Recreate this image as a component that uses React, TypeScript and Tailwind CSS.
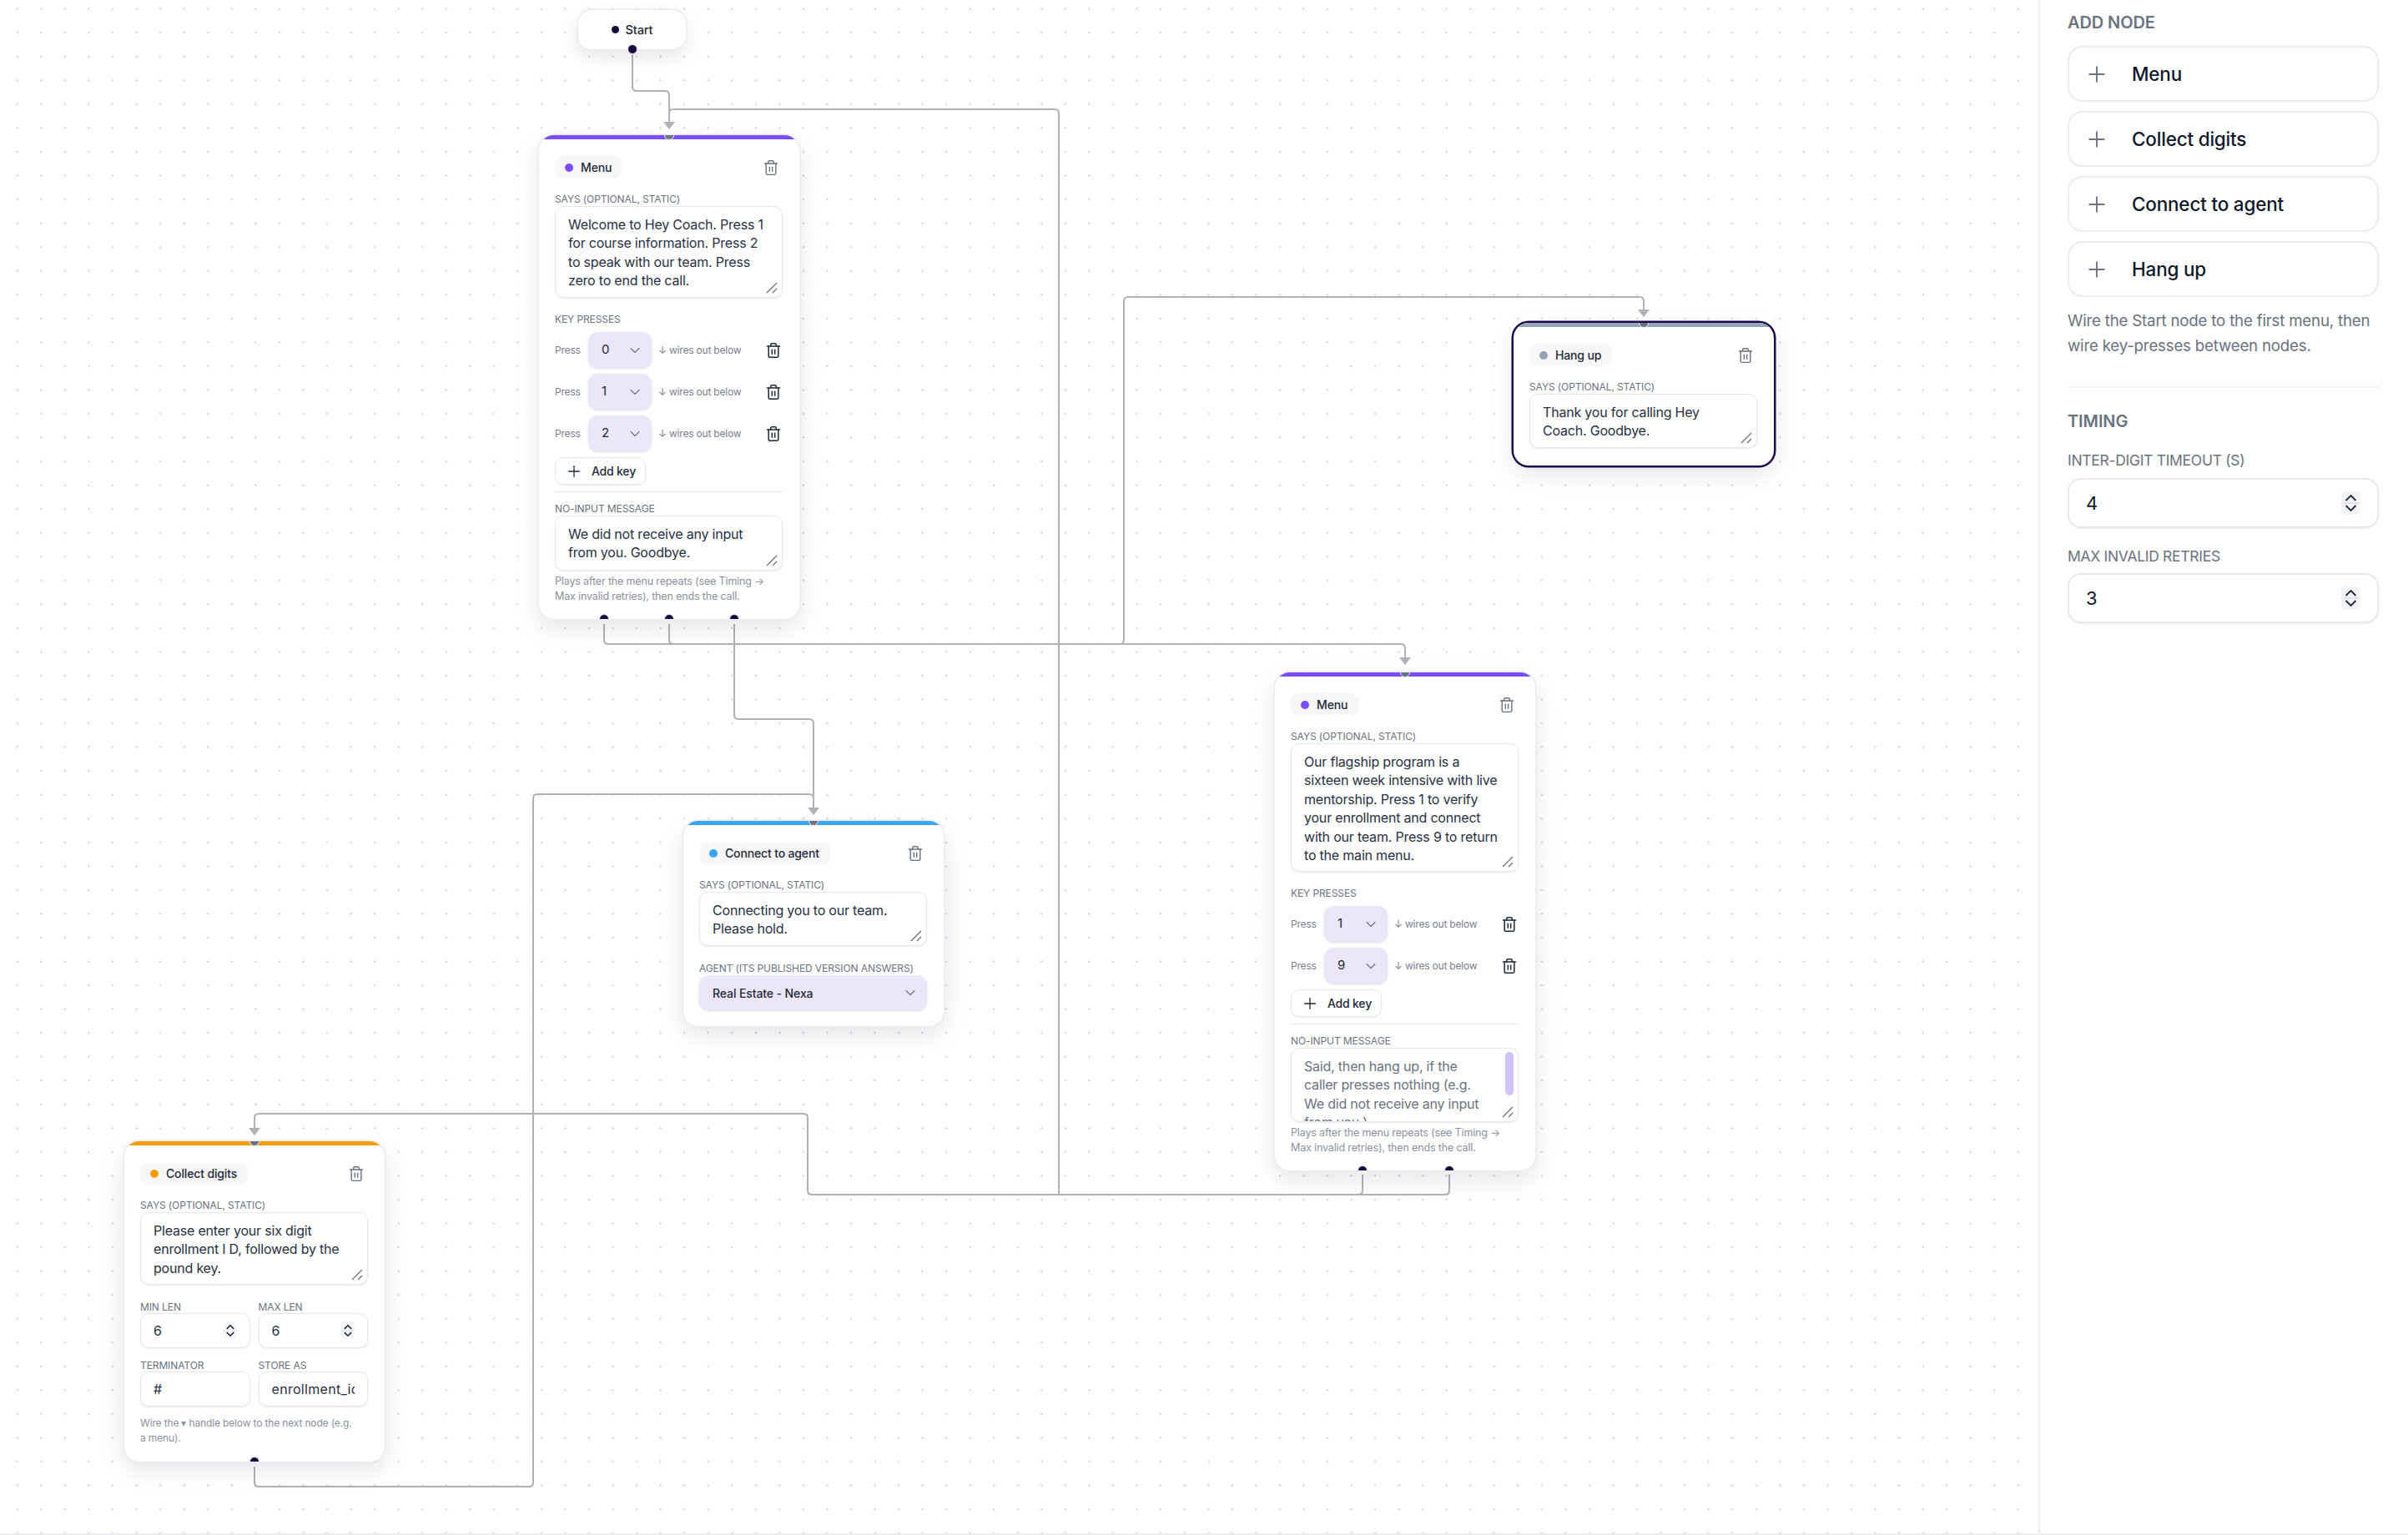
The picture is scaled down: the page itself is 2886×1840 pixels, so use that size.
import type { ReactNode } from "react";
import { ChevronDown, Plus, Trash2 } from "lucide-react";

const EDGE_PATHS = [
  "M758 65 V104 Q758 109 763 109 H797 Q802 109 802 114 V150",
  "M1737 1408 V1427 Q1737 1432 1732 1432 H973 Q968 1432 968 1427 V1340 Q968 1335 963 1335 H310 Q305 1335 305 1340 V1356",
  "M1633 1408 V1427 Q1633 1432 1628 1432",
  "M1269 1432 V136 Q1269 131 1264 131 H807 Q802 131 802 136",
  "M724 748 V767 Q724 772 729 772 H1679 Q1684 772 1684 777 V792",
  "M802 748 V767 Q802 772 807 772",
  "M1342 772 Q1347 772 1347 767 V361 Q1347 356 1352 356 H1965 Q1970 356 1970 361 V375",
  "M880 748 V857 Q880 862 885 862 H970 Q975 862 975 867 V972",
  "M305 1758 V1777 Q305 1782 310 1782 H634 Q639 1782 639 1777 V957 Q639 952 644 952 H970 Q975 952 975 957",
];

const ARROWS = [
  "795,146 809,146 802,155",
  "298,1352 312,1352 305,1361",
  "1677,788 1691,788 1684,797",
  "1963,371 1977,371 1970,380",
  "968,968 982,968 975,977",
];

function Edges() {
  return (
    <svg className="absolute left-0 top-0" width="2443" height="1838" fill="none">
      {EDGE_PATHS.map((d) => (
        <path key={d} d={d} stroke="#b1b1b7" strokeWidth="2" />
      ))}
      {ARROWS.map((p) => (
        <polygon key={p} points={p} fill="#b1b1b7" />
      ))}
    </svg>
  );
}

function Label({ children, className = "" }: { children: ReactNode; className?: string }) {
  return <div className={`h-[15px] text-[12px] leading-[17px] uppercase text-[#6b7280] tracking-[-0.1px] whitespace-nowrap ${className}`}>{children}</div>;
}

function Grip() {
  return (
    <svg className="absolute right-[6px] bottom-[5px]" width="14" height="14" fill="none" stroke="#6b6b70" strokeWidth="1.2">
      <path d="M1 13 L13 1 M8 13 L13 8" />
    </svg>
  );
}

function TextBox({ value, placeholder, height, scrollbar }: { value?: string; placeholder?: string; height: string; scrollbar?: boolean }) {
  return (
    <div className={`relative mt-[2px] ${height}`}>
      <textarea
        readOnly
        defaultValue={value}
        placeholder={placeholder}
        className={`block w-full h-full resize-none overflow-hidden rounded-[10px] border border-[#e6e6ec] bg-white pl-[15px] ${
          scrollbar ? "pr-[30px]" : "pr-[15px]"
        } pt-[10px] pb-[8px] text-[16px] leading-[22.4px] tracking-[-0.2px] text-[#273043] placeholder:text-[#6b7280] shadow-[0_1px_2px_rgba(30,30,60,0.08)] outline-none`}
      />
      {scrollbar && <div className="absolute right-[6px] top-[5px] w-[10px] h-[52px] rounded-[5px] bg-[#d0c3f7]" />}
      <Grip />
    </div>
  );
}

function Handle({ side, x, color }: { side: "top" | "bottom"; x: string; color: string }) {
  return (
    <div className={`absolute ${x} ${side === "top" ? "top-[-6px]" : "bottom-[-6px]"} w-[12px] h-[12px] -ml-[6px] rounded-full border border-[#ece9f8] ${color}`} />
  );
}

function Card({
  pos,
  bar,
  dot,
  title,
  selected,
  handles,
  children,
}: {
  pos: string;
  bar: string;
  dot: string;
  title: string;
  selected?: boolean;
  handles: ReactNode;
  children: ReactNode;
}) {
  return (
    <div
      className={`absolute ${pos} w-[312px] rounded-[18px] overflow-hidden bg-white pl-[19px] pr-[20px] pt-[25px] ${
        selected
          ? "shadow-[0_0_0_2.5px_#1e0b4b,0_10px_28px_rgba(30,30,60,0.12)]"
          : "shadow-[0_0_0_1.5px_#ebebf2,0_10px_28px_rgba(30,30,60,0.12)]"
      }`}
    >
      <div className={`absolute left-0 right-0 top-0 h-[5px] ${bar}`} />
      {handles}
      <div className="flex items-center justify-between h-[27px]">
        <div className="flex items-center h-[27px] rounded-[9px] bg-[#f7f7f9] pl-[12px] pr-[13px] gap-[9px]">
          <span className={`w-[10px] h-[10px] rounded-full ${dot}`} />
          <span className="text-[14px] font-medium tracking-[-0.15px] text-[#1f2937]">{title}</span>
        </div>
        <Trash2 size={20} strokeWidth={1.7} className="text-[#6b7280] mr-[4px]" />
      </div>
      {children}
    </div>
  );
}

function KeyRow({ digit }: { digit: string }) {
  return (
    <div className="flex items-center h-[43px] mb-[7px]">
      <span className="w-[40px] text-[12px] text-[#7b8090] tracking-[-0.2px]">Press</span>
      <div className="flex items-center justify-between w-[76px] h-[43px] rounded-[12px] bg-[#ebe7f9] shadow-[0_1px_3px_rgba(30,30,60,0.15)] pl-[16px] pr-[10px]">
        <span className="text-[15px] text-[#1f2937]">{digit}</span>
        <ChevronDown size={20} strokeWidth={1.3} className="text-[#6b7280]" />
      </div>
      <span className="ml-[8px] w-[130px] text-[12px] text-[#7b8090] tracking-[-0.2px] whitespace-nowrap">↓ wires out below</span>
      <Trash2 size={20} strokeWidth={1.8} className="text-[#1f2937] -ml-[2px]" />
    </div>
  );
}

function AddKey() {
  return (
    <div className="flex items-center w-[109px] h-[33px] rounded-[10px] border border-[#e6e6ec] shadow-[0_1px_2px_rgba(30,30,60,0.08)] pl-[11px] gap-[10px]">
      <Plus size={22} strokeWidth={1.4} className="text-[#1f2937]" />
      <span className="text-[14px] font-medium tracking-[-0.2px] text-[#1f2937]">Add key</span>
    </div>
  );
}

function Hint() {
  return (
    <div className="mt-[4px] pb-[18px] text-[12.5px] leading-[18px] text-[#8b90a0] tracking-[-0.15px] whitespace-nowrap">
      Plays after the menu repeats (see Timing →
      <br />
      Max invalid retries), then ends the call.
    </div>
  );
}

function Spinner({ big }: { big?: boolean }) {
  return (
    <svg
      viewBox="0 0 23 28"
      width={big ? 23 : 16}
      height={big ? 28 : 20}
      fill="none"
      className="shrink-0 rounded-[5px] bg-[#f3f4f6]"
    >
      <path d="M0 14 H23" stroke="#e2e2e6" strokeWidth="1.5" />
      <path d="M5.5 11 L11.5 5 L17.5 11 M5.5 17 L11.5 23 L17.5 17" stroke="#1f2937" strokeWidth={big ? 1.8 : 2.2} />
    </svg>
  );
}

function SmallInput({ value, spin }: { value: string; spin?: boolean }) {
  return (
    <div className="flex items-center justify-between h-[42px] rounded-[10px] border border-[#e6e6ec] shadow-[0_1px_2px_rgba(30,30,60,0.08)] pl-[15px] pr-[15px]">
      <span className="overflow-hidden whitespace-nowrap text-[16px] tracking-[0.3px] text-[#273043]">{value}</span>
      {spin && <Spinner />}
    </div>
  );
}

function MenuNode({
  pos,
  says,
  saysHeight,
  keys,
  noInput,
  noInputHeight,
  handleXs,
}: {
  pos: string;
  says: string;
  saysHeight: string;
  keys: string[];
  noInput?: string;
  noInputHeight: string;
  handleXs: string[];
}) {
  return (
    <Card
      pos={pos}
      bar="bg-[#7c4dff]"
      dot="bg-[#7c4dff]"
      title="Menu"
      handles={
        <>
          <Handle side="top" x="left-[156px]" color="bg-[#6b7280]" />
          {handleXs.map((x) => (
            <Handle key={x} side="bottom" x={x} color="bg-[#170b3b]" />
          ))}
        </>
      }
    >
      <Label className="mt-[16px]">Says (optional, static)</Label>
      <TextBox value={says} height={saysHeight} />
      <Label className="mt-[17px] mb-[9px]">Key presses</Label>
      {keys.map((k) => (
        <KeyRow key={k} digit={k} />
      ))}
      <AddKey />
      <div className="mt-[8px] h-px bg-[#e8e8ee]" />
      <Label className="mt-[11px]">No-input message</Label>
      {noInput ? (
        <TextBox value={noInput} height={noInputHeight} />
      ) : (
        <TextBox
          placeholder="Said, then hang up, if the caller presses nothing (e.g. We did not receive any input from you.)"
          height={noInputHeight}
          scrollbar
        />
      )}
      <Hint />
    </Card>
  );
}

function SideLabel({ children }: { children: ReactNode }) {
  return <div className="h-[22px] text-[17.5px] leading-[22px] uppercase tracking-[-0.3px] text-[#6b7280]">{children}</div>;
}

function SideNumber({ value }: { value: string }) {
  return (
    <div className="flex items-center justify-between h-[60px] rounded-[16px] border-2 border-[#e8e8ef] shadow-[0_1px_2px_rgba(30,30,60,0.08)] pl-[20px] pr-[20px]">
      <span className="text-[22px] text-[#111827]">{value}</span>
      <Spinner big />
    </div>
  );
}

export default function App() {
  return (
    <div className="flex h-[1840px] overflow-hidden bg-white border-b-2 border-[#ececf2] [font-family:Inter,sans-serif]">
      <div className="relative flex-1 bg-[radial-gradient(circle,#d3d7e6_1.1px,transparent_1.4px)] bg-[size:28.56px_28.56px] bg-[position:6.6px_-3.6px]">
        <Edges />

        <div className="absolute left-[693px] top-[12px] flex items-center justify-center gap-[8px] w-[129px] h-[47px] rounded-[16px] bg-white shadow-[0_0_0_1.5px_#ebebf2,0_8px_20px_rgba(30,30,60,0.12)]">
          <span className="w-[9px] h-[9px] rounded-full bg-[#170b3b]" />
          <span className="text-[14.5px] font-medium tracking-[-0.1px] text-[#1f2937]">Start</span>
          <div className="absolute left-[59px] bottom-[-6px] w-[12px] h-[12px] rounded-full border border-[#ece9f8] bg-[#170b3b]" />
        </div>

        <MenuNode
          pos="left-[646px] top-[162px]"
          says="Welcome to Hey Coach. Press 1 for course information. Press 2 to speak with our team. Press zero to end the call."
          saysHeight="h-[110px]"
          keys={["0", "1", "2"]}
          noInput="We did not receive any input from you. Goodbye."
          noInputHeight="h-[66px]"
          handleXs={["left-[78px]", "left-[156px]", "left-[234px]"]}
        />

        <Card
          pos="left-[1814px] top-[387px]"
          bar="bg-[#94a3b8]"
          dot="bg-[#94a3b8]"
          title="Hang up"
          selected
          handles={<Handle side="top" x="left-[156px]" color="bg-[#6b7280]" />}
        >
          <Label className="mt-[16px]">Says (optional, static)</Label>
          <TextBox value="Thank you for calling Hey Coach. Goodbye." height="h-[65px]" />
          <div className="h-[21px]" />
        </Card>

        <MenuNode
          pos="left-[1528px] top-[806px]"
          says="Our flagship program is a sixteen week intensive with live mentorship. Press 1 to verify your enrollment and connect with our team. Press 9 to return to the main menu."
          saysHeight="h-[154px]"
          keys={["1", "9"]}
          noInputHeight="h-[89px]"
          handleXs={["left-[105px]", "left-[209px]"]}
        />

        <Card
          pos="left-[819px] top-[984px]"
          bar="bg-[#38a4f2]"
          dot="bg-[#38a4f2]"
          title="Connect to agent"
          handles={<Handle side="top" x="left-[156px]" color="bg-[#6b7280]" />}
        >
          <Label className="mt-[16px]">Says (optional, static)</Label>
          <TextBox value="Connecting you to our team. Please hold." height="h-[65px]" />
          <Label className="mt-[18px]">Agent (its published version answers)</Label>
          <div className="flex items-center justify-between mt-[2px] mb-[19px] h-[42px] rounded-[12px] bg-[#ebe7f9] shadow-[0_1px_3px_rgba(30,30,60,0.15)] pl-[16px] pr-[10px]">
            <span className="text-[14px] font-medium tracking-[-0.1px] text-[#1f2937]">Real Estate - Nexa</span>
            <ChevronDown size={20} strokeWidth={1.3} className="text-[#6b7280]" />
          </div>
        </Card>

        <Card
          pos="left-[149px] top-[1368px]"
          bar="bg-[#f59e0b]"
          dot="bg-[#f59e0b]"
          title="Collect digits"
          handles={
            <>
              <Handle side="top" x="left-[156px]" color="bg-[#6b7280]" />
              <Handle side="bottom" x="left-[156px]" color="bg-[#170b3b]" />
            </>
          }
        >
          <Label className="mt-[16px]">Says (optional, static)</Label>
          <TextBox value="Please enter your six digit enrollment I D, followed by the pound key." height="h-[87px]" />
          <div className="grid grid-cols-2 gap-x-[10px] mt-[18px]">
            <div>
              <Label className="mb-[1px]">Min len</Label>
              <SmallInput value="6" spin />
            </div>
            <div>
              <Label className="mb-[1px]">Max len</Label>
              <SmallInput value="6" spin />
            </div>
            <div className="mt-[12px]">
              <Label className="mb-[1px]">Terminator</Label>
              <SmallInput value="#" />
            </div>
            <div className="mt-[12px]">
              <Label className="mb-[1px]">Store as</Label>
              <SmallInput value="enrollment_id" />
            </div>
          </div>
          <div className="mt-[11px] pb-[19px] pr-[10px] text-[12px] leading-[18px] text-[#8b90a0] tracking-[-0.15px]">
            Wire the ▾ handle below to the next node (e.g. a menu).
          </div>
        </Card>
      </div>

      <aside className="w-[443px] shrink-0 border-l-2 border-[#ececf2] bg-white pl-[33px] pr-[35px] pt-[15px]">
        <div className="h-[24px] text-[20px] leading-[24px] font-semibold uppercase tracking-[-0.1px] text-[#6b7280]">Add node</div>
        <div className="flex flex-col gap-[11px] mt-[16px]">
          {["Menu", "Collect digits", "Connect to agent", "Hang up"].map((name) => (
            <div key={name} className="flex items-center h-[67px] rounded-[18px] border-2 border-[#ecebf1] pl-[18px] gap-[27px]">
              <Plus size={30} strokeWidth={1.5} className="text-[#6b7280]" />
              <span className="text-[22.5px] font-medium tracking-[-0.2px] text-[#0f172a]">{name}</span>
            </div>
          ))}
        </div>
        <p className="mt-[14px] text-[18.7px] leading-[30px] tracking-[-0.2px] text-[#6b7280]">
          Wire the Start node to the first menu, then wire key-presses between nodes.
        </p>
        <div className="mt-[33px] h-[2px] bg-[#f0f0f4]" />
        <div className="mt-[28px] h-[24px] text-[20px] leading-[24px] font-semibold uppercase tracking-[-0.1px] text-[#6b7280]">Timing</div>
        <div className="mt-[24px]">
          <SideLabel>Inter-digit timeout (s)</SideLabel>
        </div>
        <div className="mt-[10px]">
          <SideNumber value="4" />
        </div>
        <div className="mt-[23px]">
          <SideLabel>Max invalid retries</SideLabel>
        </div>
        <div className="mt-[9px]">
          <SideNumber value="3" />
        </div>
      </aside>
    </div>
  );
}
